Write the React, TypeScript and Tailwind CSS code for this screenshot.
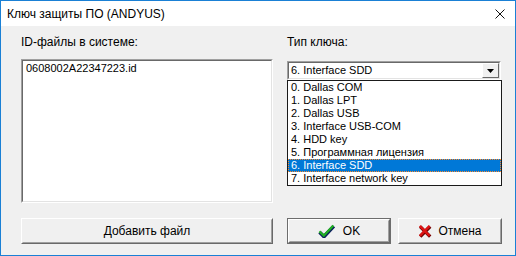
const keyTypes = [
  "0. Dallas COM",
  "1. Dallas LPT",
  "2. Dallas USB",
  "3. Interface USB-COM",
  "4. HDD key",
  "5. Программная лицензия",
  "6. Interface SDD",
  "7. Interface network key",
];

const selected = 6;

const Sunken = ({ className, children }: { className: string; children?: React.ReactNode }) => (
  <div className={`border border-t-[#a0a0a0] border-l-[#a0a0a0] border-r-white border-b-white ${className}`}>
    <div className="w-full h-full border border-t-[#696969] border-l-[#696969] border-r-[#e3e3e3] border-b-[#e3e3e3] bg-white">
      {children}
    </div>
  </div>
);

const Button = ({
  children,
  className,
  isDefault,
}: {
  children: React.ReactNode;
  className: string;
  isDefault?: boolean;
}) => (
  <button
    className={`h-[26px] ${isDefault ? "border border-[#6d6d6d]" : ""} ${className}`}
  >
    <div className="w-full h-full border border-t-white border-l-white border-r-[#696969] border-b-[#696969]">
      <div className="w-full h-full flex items-center justify-center border border-t-[#f0f0f0] border-l-[#f0f0f0] border-r-[#a0a0a0] border-b-[#a0a0a0] bg-[#f0f0f0] text-[12px] text-black">
        {children}
      </div>
    </div>
  </button>
);

const CheckIcon = () => (
  <svg width="17" height="14" viewBox="0 0 17 14">
    <path d="M1.6 8.2 L6 12.6 L15.8 2.2" stroke="#0b1e5e" strokeWidth="3.6" fill="none" />
    <path d="M1.4 7.4 L5.8 11.6 L15.4 1.4" stroke="#1fae22" strokeWidth="2.2" fill="none" />
  </svg>
);

const CrossIcon = () => (
  <svg width="14" height="14" viewBox="0 0 14 14">
    <path d="M2.2 2.6 L12.2 12.6 M12.2 2.6 L2.2 12.6" stroke="#6e0000" strokeWidth="3.4" fill="none" />
    <path d="M1.8 1.8 L11.6 11.8 M11.6 1.8 L1.8 11.8" stroke="#dd1414" strokeWidth="2.4" fill="none" />
  </svg>
);

export default function App() {
  return (
    <div className="w-[516px] h-[256px] bg-[#f0f0f0] border border-[#1a80d5] flex flex-col font-['Liberation_Sans',Arial,sans-serif] text-black">
      {/* Title bar */}
      <div className="h-[25px] bg-white flex items-center justify-between pl-[6px] pr-[10px]">
        <span className="text-[12px]">Ключ защиты ПО (ANDYUS)</span>
        <svg width="10" height="10" viewBox="0 0 10 10">
          <path d="M0.5 0.5 L9.5 9.5 M9.5 0.5 L0.5 9.5" stroke="#111" strokeWidth="1" fill="none" />
        </svg>
      </div>

      <div className="flex-1 flex gap-[14px] pl-[20px] pt-[9px]">
        {/* Left column */}
        <div className="w-[252px] flex flex-col">
          <div className="h-[14px] leading-[14px] text-[12px]">ID-файлы в системе:</div>
          <Sunken className="mt-[10px] h-[144px]">
            <div className="pl-[3px] pt-[1px] text-[11px] leading-[13px]">0608002A22347223.id</div>
          </Sunken>
          <Button className="mt-[15px] w-[252px]">Добавить файл</Button>
        </div>

        {/* Right column */}
        <div className="w-[215px] flex flex-col">
          <div className="h-[14px] leading-[14px] text-[12px]">Тип ключа:</div>
          <div className="relative mt-[12px] w-[214px]">
            <Sunken className="h-[19px]">
              <div className="h-full flex items-center justify-between">
                <span className="pl-[2px] text-[11px] leading-[13px]">{keyTypes[selected]}</span>
                <div className="w-[17px] h-full border border-t-white border-l-white border-r-[#696969] border-b-[#696969] bg-[#f0f0f0] flex items-center justify-center">
                  <svg width="7" height="4" viewBox="0 0 7 4">
                    <path d="M0 0 L7 0 L3.5 4 Z" fill="#000" />
                  </svg>
                </div>
              </div>
            </Sunken>
            <div className="absolute left-0 top-full w-[215px] border border-[#1a1a1a] bg-white z-10">
              {keyTypes.map((t, i) => (
                <div
                  key={t}
                  className={`h-[13px] leading-[11px] text-[11px] pl-[2px] ${
                    i === selected
                      ? "bg-[#0078d7] text-white border border-dotted border-[#ff8a2a]"
                      : "border border-transparent"
                  }`}
                >
                  {t}
                </div>
              ))}
            </div>
          </div>
          <div className="mt-[138px] flex gap-[7px]">
            <Button className="w-[104px]" isDefault>
              <span className="flex items-center gap-[8px]">
                <CheckIcon />
                <span className="text-[12px]">OK</span>
              </span>
            </Button>
            <Button className="w-[104px]">
              <span className="flex items-center gap-[6px]">
                <CrossIcon />
                <span className="text-[12px]">Отмена</span>
              </span>
            </Button>
          </div>
        </div>
      </div>
    </div>
  );
}
